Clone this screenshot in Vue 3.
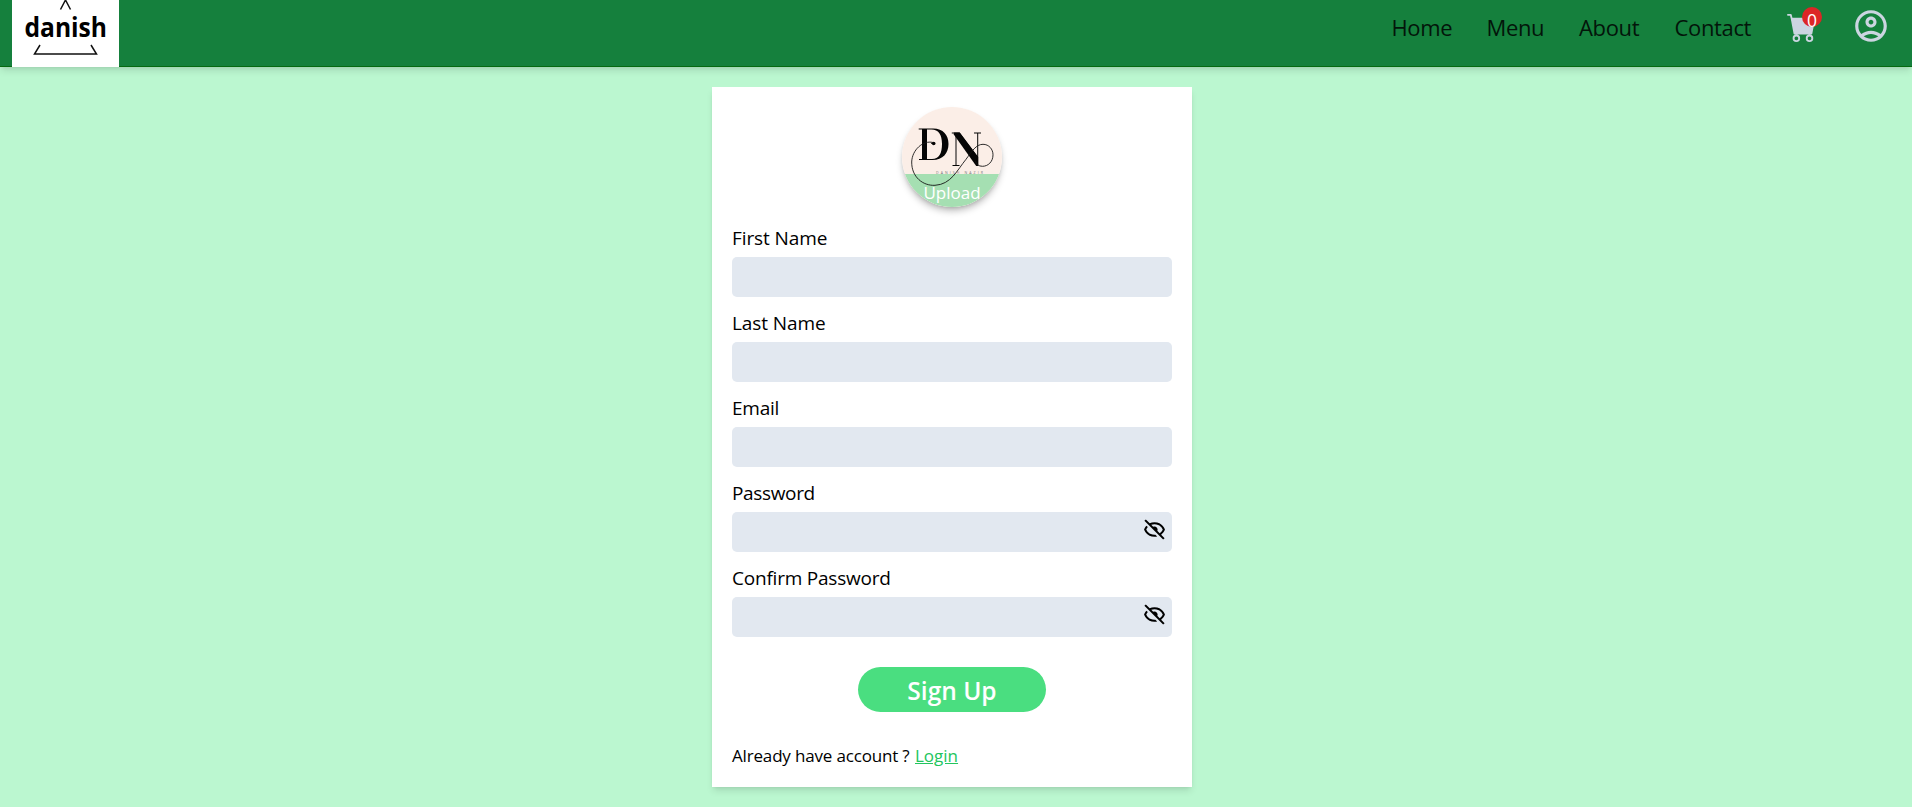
<script setup>
const links = [
  { text: 'Home', cls: 'home' },
  { text: 'Menu', cls: 'menu' },
  { text: 'About', cls: 'about' },
  { text: 'Contact', cls: 'contact' },
]
const fields = [
  { id: 'firstName', label: 'First Name', type: 'text' },
  { id: 'lastName', label: 'Last Name', type: 'text' },
  { id: 'email', label: 'Email', type: 'email' },
  { id: 'password', label: 'Password', type: 'password' },
  { id: 'confirmPassword', label: 'Confirm Password', type: 'password' },
]
</script>

<template>
  <div class="page">
    <header class="header">
      <div class="logo">
        <svg viewBox="0 0 107 67" width="107" height="67">
          <g fill="none" stroke="#111" stroke-width="1.5">
            <path d="M48.5 9.5 53.5 0 58.5 9.5" />
            <path d="M28 45 22.5 54H84.500L79 45" />
          </g>
          <text x="12.500" y="36.500" textLength="82.500" lengthAdjust="spacingAndGlyphs">danish</text>
        </svg>
      </div>
      <nav class="nav">
        <a v-for="l in links" :key="l.text" class="link" :class="l.cls">{{ l.text }}</a>
      </nav>
      <div class="cart">
        <svg viewBox="0 0 16 16" width="30" height="30" fill="currentColor">
          <path d="M0 1.500A.5.5 0 0 1 .5 1H2a.5.5 0 0 1 .485.379L2.890 3H14.500a.5.5 0 0 1 .491.592l-1.500 8A.5.5 0 0 1 13 12H4a.5.5 0 0 1-.491-.408L2.010 3.607 1.610 2H.5a.5.5 0 0 1-.5-.5zM5 12a2 2 0 1 0 0 4 2 2 0 0 0 0-4zm7 0a2 2 0 1 0 0 4 2 2 0 0 0 0-4zm-7 1a1 1 0 1 1 0 2 1 1 0 0 1 0-2zm7 0a1 1 0 1 1 0 2 1 1 0 0 1 0-2z" />
        </svg>
        <span class="badge">0</span>
      </div>
      <svg class="user" viewBox="0 0 24 24" width="38" height="38" fill="currentColor">
        <path d="M12 2C6.480 2 2 6.480 2 12s4.480 10 10 10 10-4.480 10-10S17.520 2 12 2zM7.350 18.500C8.660 17.560 10.260 17 12 17s3.340.56 4.650 1.500c-1.310.94-2.910 1.500-4.650 1.500s-3.340-.56-4.650-1.500zm10.790-1.380C16.450 15.800 14.320 15 12 15s-4.450.8-6.140 2.120C4.700 15.730 4 13.950 4 12c0-4.420 3.580-8 8-8s8 3.580 8 8c0 1.950-.7 3.730-1.860 5.120z" />
        <path d="M12 6c-1.930 0-3.500 1.570-3.500 3.500S10.070 13 12 13s3.500-1.570 3.500-3.500S13.930 6 12 6zm0 5c-.83 0-1.500-.67-1.500-1.500S11.170 8 12 8s1.500.67 1.500 1.500S12.830 11 12 11z" />
      </svg>
    </header>

    <main class="main">
      <section class="card">
        <label class="avatar">
          <svg viewBox="0 0 100 100" width="100" height="100">
            <rect width="100" height="100" fill="#fbeee7" />
            <text class="tagline" x="34" y="66.500" textLength="47">DANISH NAZIR</text>
            <rect y="67" width="100" height="33" fill="#a5dfb2" />
            <g fill="#050505">
              <path d="M16.700 21.500h14.500c10 0 15.300 6.500 15.300 15.500s-5.500 16-16 16H17v-1h3V22.500h-3.300zM25 22.500V52h5c7 0 10-5.500 10-15s-3.500-14.500-10.500-14.500z" fill-rule="evenodd" />
              <path d="M49.800 25.500h7.700L75.200 49V26.500H72v-1h7v1h-2.800V59L54.500 28.500V58h3v1h-7v-1h3V26.500h-3.700z" />
              <path d="M51.800 25.500h6L76.200 50V59h-2L51.800 27.500z" />
              <path d="M29 35.800h3.500v1H29z" />
              <circle cx="31.700" cy="36.500" r="1.800" />
            </g>
            <path d="M31 35.500C21 33 10 43 9.700 55 9.500 70 21 79 33 78.300c16-.8 22-15 31-26 6-8 10-15 17-15 6 0 10 5 10 10.500 0 7-5 11.500-10.500 11.500-4 0-6-2-7-5" fill="none" stroke="#161616" stroke-width="0.900" />
          </svg>
          <span class="upload">Upload</span>
        </label>

        <form class="form" @submit.prevent>
          <div v-for="f in fields" :key="f.id" class="field">
            <label :for="f.id" class="label" :class="f.id">{{ f.label }}</label>
            <div class="box">
              <input :id="f.id" :type="f.type" class="input" />
              <svg v-if="f.type === 'password'" class="eye" viewBox="0 0 24 24" width="25" height="25">
                <path d="M12 19c.946 0 1.810-.103 2.598-.281l-1.757-1.757c-.273.021-.55.038-.841.038-5.351 0-7.424-3.846-7.926-5a8.642 8.642 0 0 1 1.508-2.297L4.184 8.305c-1.538 1.667-2.121 3.346-2.132 3.379a.994.994 0 0 0 0 .633C2.073 12.383 4.367 19 12 19zm0-14c-1.837 0-3.346.396-4.604.981L3.707 2.293 2.293 3.707l18 18 1.414-1.414-3.319-3.319c2.614-1.951 3.547-4.615 3.561-4.657a.994.994 0 0 0 0-.633C21.927 11.617 19.633 5 12 5zm4.972 10.558-2.280-2.280c.19-.39.308-.819.308-1.278 0-1.641-1.359-3-3-3-.459 0-.888.118-1.277.309L8.915 7.501A9.260 9.260 0 0 1 12 7c5.351 0 7.424 3.846 7.926 5-.302.692-1.166 2.342-2.954 3.558z" />
              </svg>
            </div>
          </div>
          <button class="submit">Sign Up</button>
        </form>

        <p class="foot"><span class="ask">Already have account ?</span><a class="login">Login</a></p>
      </section>
    </main>
  </div>
</template>

<style>
body {
  margin: 0;
}
</style>

<style scoped>
.page {
  min-height: 807px;
  background: #bbf7d0;
  font-family: "Open Sans", "Noto Sans", sans-serif;
  font-weight: 400;
  color: #000;
  overflow: hidden;
}
.header {
  box-sizing: border-box;
  height: 67px;
  display: flex;
  align-items: flex-start;
  padding: 0 22px 0 12px;
  background: #15803d;
  border-bottom: 1px solid #056a10;
  box-shadow: 0 5px 7px -1px rgba(0, 0, 0, 0.1), 0 2px 4px -2px rgba(0, 0, 0, 0.1);
}
.logo {
  width: 107px;
  height: 67px;
  background: #fff;
  margin-right: auto;
}
.logo svg {
  display: block;
}
.logo text {
  font: 700 26px "Open Sans", sans-serif;
}
.nav {
  display: flex;
  font-size: 22px;
  line-height: 30px;
  letter-spacing: -0.35px;
  padding-top: 12px;
}
.link {
  white-space: nowrap;
  color: #03150a;
}
.home { width: 95px; }
.menu { width: 92.5px; }
.about { width: 95.5px; }
.contact { width: 112.5px; }
.cart {
  position: relative;
  width: 30px;
  height: 30px;
  margin: 12px 35px 0 0;
  color: #cbd5e1;
}
.cart svg {
  display: block;
}
.badge {
  position: absolute;
  left: 15px;
  top: -5px;
  width: 20px;
  height: 20px;
  border-radius: 50%;
  background: #dc2626;
  color: #fff;
  font-size: 17.5px;
  line-height: 26px;
  text-align: center;
}
.user {
  margin-top: 7px;
  color: #cbd5e1;
}
.main {
  display: flex;
  justify-content: center;
  padding: 20px 8px 20px 0;
}
.card {
  box-sizing: border-box;
  width: 480px;
  height: 700px;
  padding: 20px;
  background: #fff;
  display: flex;
  flex-direction: column;
  align-items: center;
  box-shadow: 0 5px 7px -1px rgba(0, 0, 0, 0.1), 0 2px 4px -2px rgba(0, 0, 0, 0.1);
}
.avatar {
  position: relative;
  width: 100px;
  height: 100px;
  flex: none;
  border-radius: 50%;
  overflow: hidden;
  box-shadow: 0 5px 7px -1px rgba(0, 0, 0, 0.25), 0 2px 4px -2px rgba(0, 0, 0, 0.2);
}
.avatar svg {
  display: block;
}
.tagline {
  font: 3.5px "Open Sans", sans-serif;
  fill: #777;
}
.upload {
  position: absolute;
  left: 0;
  right: 0;
  top: 73px;
  text-align: center;
  color: #fff;
  font-size: 17px;
  line-height: 25px;
}
.form {
  width: 100%;
  display: flex;
  flex-direction: column;
  align-items: center;
  padding-top: 15px;
}
.field {
  width: 100%;
  height: 85px;
}
.label {
  display: block;
  height: 35px;
  line-height: 33px;
  font-size: 19px;
  width: max-content;
  letter-spacing: -0.1px;
}
.label.email { letter-spacing: -0.25px; }
.label.password { letter-spacing: -0.35px; }
.label.confirmPassword { letter-spacing: -0.22px; }
.box {
  position: relative;
  height: 40px;
}
.input {
  display: block;
  box-sizing: border-box;
  width: 100%;
  height: 40px;
  padding: 5px 10px;
  border: 0;
  border-radius: 5px;
  background: #e2e8f0;
  font: inherit;
  outline: none;
}
.eye {
  position: absolute;
  right: 5px;
  top: 5px;
}
.submit {
  width: 188px;
  height: 45px;
  margin-top: 20px;
  padding: 3px 0 0;
  border: 0;
  border-radius: 23px;
  background: #4ade80;
  color: #fff;
  font: 600 24.5px/42px "Open Sans", sans-serif;
}
.foot {
  align-self: flex-start;
  display: flex;
  margin: 31px 0 0;
  font-size: 17px;
  line-height: 26px;
}
.ask {
  width: 183px;
  white-space: nowrap;
  letter-spacing: -0.17px;
}
.login {
  color: #22c55e;
  text-decoration: underline;
}
</style>
